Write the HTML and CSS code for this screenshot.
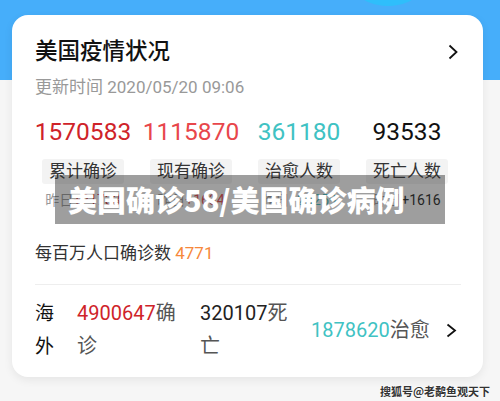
FILE: index.html
```html
<!DOCTYPE html>
<html lang="zh-CN">
<head>
    <meta charset="UTF-8">
    <meta name="viewport" content="width=device-width, initial-scale=1.0">
    <title>美国疫情状况</title>
    <link rel="stylesheet" href="styles.css">
</head>
<body>
    <div class="page">
        <div class="bubble"></div>

        <div class="card">
            <div class="card-head">
                <h1 class="title">美国疫情状况</h1>
                <svg class="chevron" width="10" height="16" viewBox="0 0 10 16"><polyline points="1.5,1.5 8.5,8 1.5,14.5" fill="none" stroke="#111" stroke-width="1.8"/></svg>
            </div>
            <div class="updated">更新时间 2020/05/20 09:06</div>

            <div class="stats">
                <div class="stat">
                    <div class="num red-dark">1570583</div>
                    <div class="label">累计确诊</div>
                    <div class="delta">昨日<span class="red-dark">+21733</span></div>
                </div>
                <div class="stat">
                    <div class="num red">1115870</div>
                    <div class="label">现有确诊</div>
                    <div class="delta">昨日<span class="red">+1634</span></div>
                </div>
                <div class="stat">
                    <div class="num teal">361180</div>
                    <div class="label">治愈人数</div>
                    <div class="delta">昨日<span class="teal">+20259</span></div>
                </div>
                <div class="stat">
                    <div class="num">93533</div>
                    <div class="label">死亡人数</div>
                    <div class="delta">昨日<span class="dark">+1616</span></div>
                </div>
            </div>

            <div class="per-million">每百万人口确诊数 <span class="orange">4771</span></div>

            <div class="abroad">
                <div class="region">海外</div>
                <div class="item item-wrap"><span class="red-dark">4900647</span>确诊</div>
                <div class="item item-wrap"><span class="dark">320107</span>死亡</div>
                <div class="item"><span class="teal">1878620</span>治愈</div>
                <svg class="chevron" width="11" height="15" viewBox="0 0 11 15"><polyline points="1.5,1.5 9,7.5 1.5,13.5" fill="none" stroke="#111" stroke-width="1.8"/></svg>
            </div>

            <div class="banner">美国确诊58/美国确诊病例</div>
        </div>

        <div class="watermark">搜狐号@老鹬鱼观天下</div>
    </div>
</body>
</html>
```

FILE: styles.css
```css
body {
    margin: 0;
    font-family: Roboto, "Noto Sans CJK SC", sans-serif;
    background-color: #f6f6f6;
    color: #222;
}

.page {
    position: relative;
    height: 401px;
    overflow: hidden;
    padding-top: 15px;
    box-sizing: border-box;
    background: linear-gradient(#46aefa 0, #46aefa 80px, #f6f6f6 80px);
}

.bubble {
    position: absolute;
    left: 338px;
    top: -94px;
    width: 100px;
    height: 100px;
    border-radius: 50%;
    background: #2fbefb;
}

.card {
    position: relative;
    width: 471px;
    margin-left: 12px;
    padding: 22px 22px 14px 23px;
    box-sizing: border-box;
    background: #ffffff;
    border-radius: 16px;
    box-shadow: 0 3px 10px rgba(0, 0, 0, 0.07);
}

.card-head {
    display: flex;
    justify-content: space-between;
    align-items: center;
}

.title {
    margin: 0;
    font-size: 22.5px;
    line-height: 29px;
    font-weight: 500;
    color: #111;
}

.card-head .chevron {
    margin-right: 3px;
    margin-top: 1px;
}

.updated {
    margin-top: 10px;
    font-size: 17px;
    line-height: 23px;
    color: #999;
}

.stats {
    display: grid;
    grid-template-columns: repeat(4, 1fr);
    margin: 18px 0 0 -6px;
    text-align: center;
}

.num {
    font-size: 24.5px;
    line-height: 30px;
    color: #111;
}

.label {
    display: inline-block;
    margin-top: 12px;
    padding: 0 7px;
    font-size: 17px;
    line-height: 25px;
    color: #333;
    background: #f3f3f3;
    border-radius: 3px;
}

.delta {
    margin-top: 6px;
    font-size: 14px;
    line-height: 20px;
    color: #999;
}

.per-million {
    margin-top: 31px;
    font-size: 17px;
    line-height: 24px;
    color: #333;
    padding-bottom: 19px;
    border-bottom: 1px solid #eeeeee;
}

.abroad {
    display: flex;
    align-items: center;
    padding-top: 12px;
    font-size: 20px;
    line-height: 33px;
    color: #555;
}

.region {
    width: 20px;
    font-size: 19px;
    color: #111;
    margin-right: 22px;
}

.item-wrap {
    width: 105px;
    margin-right: 18px;
}

.abroad .item:nth-child(3) {
    margin-right: 6px;
}

.abroad .chevron {
    margin-left: auto;
    margin-right: 4px;
}

.banner {
    position: absolute;
    left: 43px;
    top: 160px;
    width: 390px;
    height: 49px;
    padding-left: 13px;
    box-sizing: border-box;
    background: rgba(40, 40, 40, 0.45);
    color: #ffffff;
    font-family: "Noto Sans CJK SC", sans-serif;
    font-size: 29px;
    font-weight: 900;
    line-height: 49px;
}

.watermark {
    margin-top: 6px;
    padding-right: 10px;
    text-align: right;
    font-family: "Noto Sans CJK SC", sans-serif;
    font-size: 11px;
    font-weight: 700;
    color: #333;
    text-shadow: 0 0 2px #fff, 0 0 2px #fff;
}

.red-dark { color: #cf2329; }
.red { color: #e8464b; }
.teal { color: #40c2c3; }
.dark { color: #222; }
.orange { color: #f6883b; }
```
